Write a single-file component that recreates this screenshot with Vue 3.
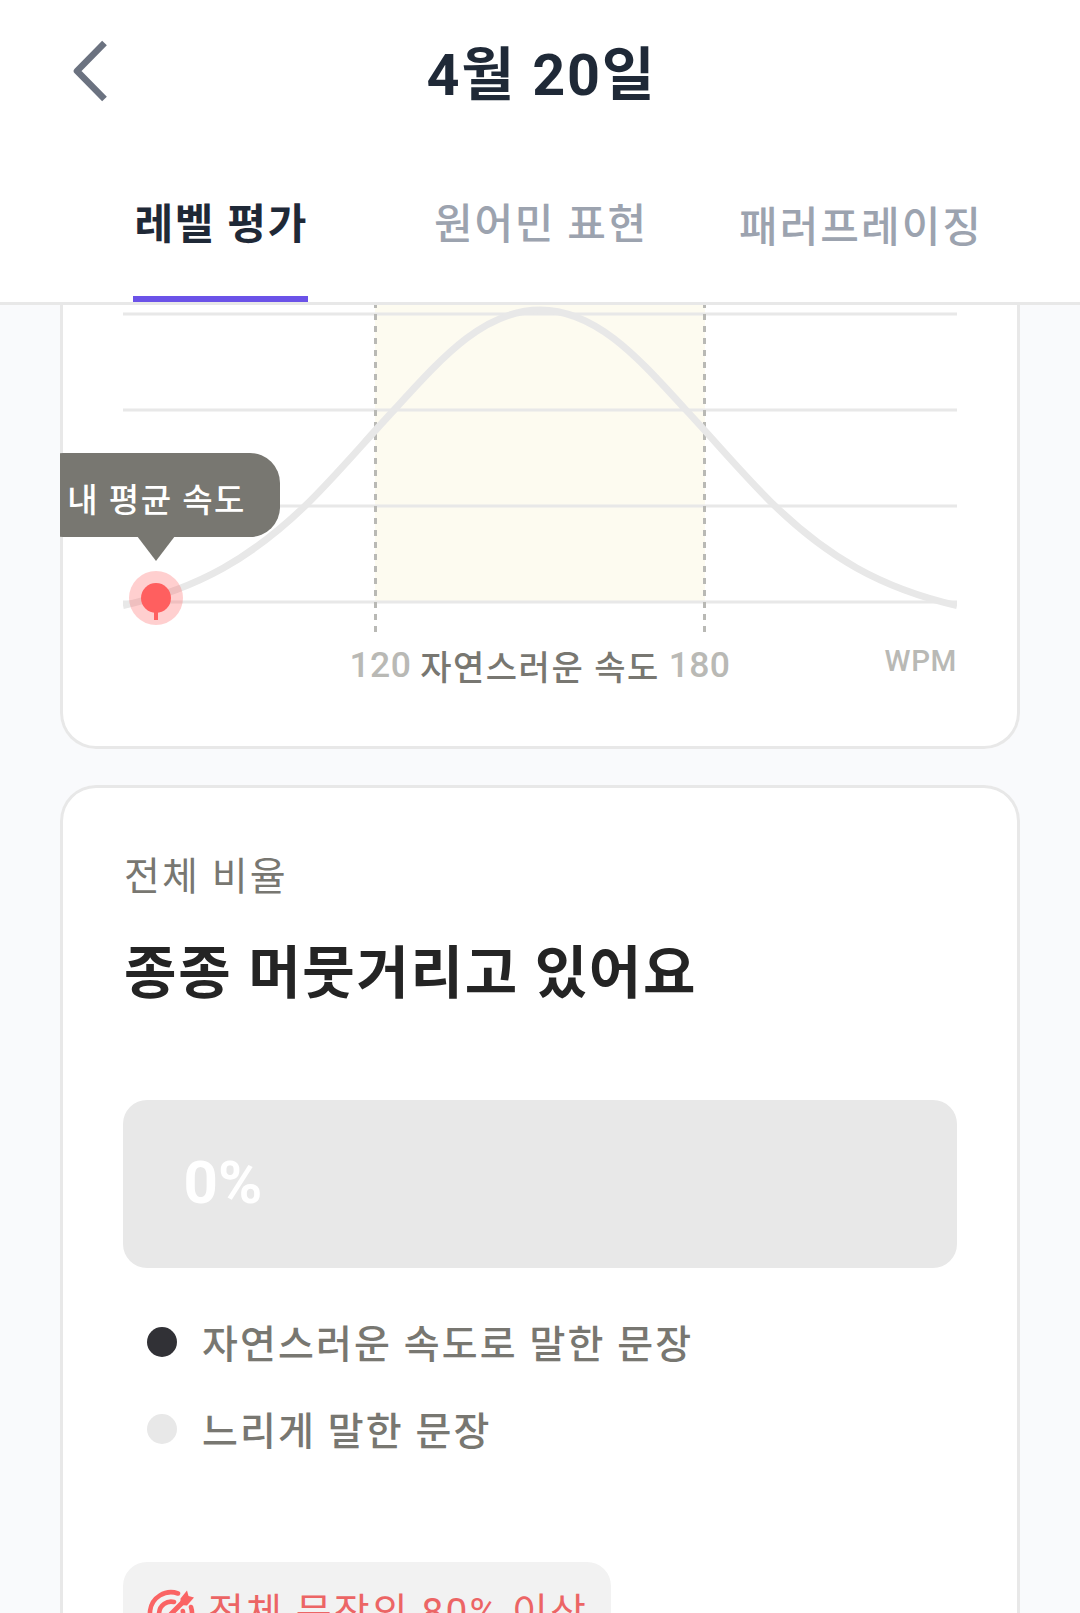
<script setup>
import { ref } from "vue";

const tabs = ["레벨 평가", "원어민 표현", "패러프레이징"];
const activeTab = ref(0);

const gridLines = [18, 114, 210, 306];
const bounds = [252.5, 581.5];

const legend = [
  { label: "자연스러운 속도로 말한 문장", tone: "dark" },
  { label: "느리게 말한 문장", tone: "light" },
];
</script>

<template>
  <div class="screen">
    <header class="header">
      <div class="title-bar">
        <button class="back-btn" title="뒤로">
          <svg width="36" height="62" viewBox="0 0 36 62" fill="none" stroke="#6b7280" stroke-width="6.6">
            <path d="M32.500 3 5 31l27.500 28" stroke-linejoin="round" />
          </svg>
        </button>
        <h1 class="title">4월 20일</h1>
      </div>
      <nav class="tabs">
        <button
          v-for="(tab, i) in tabs"
          :key="tab"
          class="tab"
          :class="[{ active: i === activeTab }, `tab-${i}`]"
          @click="activeTab = i"
        >
          {{ tab }}
        </button>
      </nav>
    </header>

    <main class="content">
      <section class="card speed-card">
        <div class="chart">
          <svg class="plot" width="834" height="336" viewBox="0 0 834 336" fill="none">
            <rect x="252" y="0" width="330" height="306" fill="#fdfbf0" />
            <path v-for="y in gridLines" :key="y" :d="`M0 ${y}H834`" stroke="#e8e8e8" stroke-width="3" />
            <path
              v-for="x in bounds"
              :key="x"
              :d="`M${x} 6V336`"
              stroke="#b9b9b5"
              stroke-width="3"
              stroke-dasharray="6 6"
            />
            <path
              d="M0 309.500C77 292 130 260 182 210C212 181 242 145 272 113C317 64 360 14 417 14C474 14 517 64 562 113C592 145 622 181 652 210C704 260 757 292 834 309.500"
              stroke="#e8e8e8"
              stroke-width="7"
            />
            <circle cx="33" cy="302" r="27" fill="#ff5f5f" fill-opacity=".3" />
            <circle cx="33" cy="302" r="15" fill="#ff5f5f" />
            <path d="M33 310V324" stroke="#ff5f5f" stroke-width="4" />
          </svg>
          <div class="tooltip">내 평균 속도</div>
        </div>
        <div class="axis">
          <span class="num">120</span>
          <span class="range">자연스러운 속도</span>
          <span class="num">180</span>
          <span class="unit">WPM</span>
        </div>
      </section>

      <section class="card ratio-card">
        <p class="caption">전체 비율</p>
        <h2 class="headline">종종 머뭇거리고 있어요</h2>
        <div class="bar">0%</div>
        <ul class="legend">
          <li v-for="item in legend" :key="item.label">
            <span class="dot" :class="item.tone"></span>
            <span class="legend-label">{{ item.label }}</span>
          </li>
        </ul>
        <div class="goal">
          <svg width="48" height="48" viewBox="0 0 48 48" fill="none" stroke="#fa6464" stroke-width="4.6" stroke-linecap="round">
            <path d="M31 4.500A21 21 0 1 0 44 18" />
            <path d="M27 13A12 12 0 1 0 35.800 22" />
            <path d="M24 25 37 12" stroke-width="5" />
            <path d="M33.500 9.500 40 1.500 41.500 7 47 8.500 40 16.500 33.500 16Z" fill="#fa6464" stroke="none" />
          </svg>
          <span class="goal-label">전체 문장의 80% 이상</span>
        </div>
      </section>
    </main>
  </div>
</template>

<style>
body {
  margin: 0;
  background: #f9fafc;
}
</style>

<style scoped>
.screen {
  width: 1080px;
  height: 1613px;
  overflow: hidden;
  display: flex;
  flex-direction: column;
  background: #f9fafc;
  font-family: Roboto, "Noto Sans CJK KR", sans-serif;
}

button {
  padding: 0;
  border: none;
  background: none;
  font: inherit;
  cursor: pointer;
}

.header {
  flex: none;
  height: 302px;
  border-bottom: 3px solid #e8e8e8;
  background: #fff;
}

.title-bar {
  display: grid;
  grid-template-columns: 120px 1fr 120px;
  align-items: center;
  height: 142px;
}

.back-btn {
  display: flex;
  padding-left: 72px;
}

.title {
  margin: 0;
  padding: 0 0 3px 3px;
  font-size: 57.5px;
  font-weight: 700;
  letter-spacing: 1.8px;
  text-align: center;
  color: #1f2937;
}

.tabs {
  display: flex;
  height: 160px;
  padding-left: 132.5px;
}

.tab {
  box-sizing: border-box;
  height: 160px;
  padding-top: 3px;
  border-bottom: 6px solid transparent;
  font-size: 42px;
  font-weight: 500;
  letter-spacing: 1.7px;
  white-space: nowrap;
  color: #9ca3af;
}

.tab.active {
  padding-left: 2px;
  font-weight: 700;
  color: #1f2937;
  border-bottom-color: #6b52e8;
}

.tab-0 {
  width: 175px;
}

.tab-1 {
  width: 216px;
  margin-left: 125.5px;
}

.tab-2 {
  width: 246px;
  margin-left: 89px;
  padding-top: 8px;
  letter-spacing: 2px;
}

.content {
  flex: 1;
  min-height: 0;
  overflow: hidden;
  display: flex;
  flex-direction: column;
  gap: 36px;
  padding: 0 60px;
}

.card {
  flex: none;
  box-sizing: border-box;
  overflow: hidden;
  padding: 0 63px;
  border-radius: 36px;
  background: #fff;
  box-shadow: inset 0 0 0 3px #e8e8e8;
}

.speed-card {
  height: 504px;
  margin-top: -60px;
  padding-top: 51px;
}

.chart {
  position: relative;
  height: 336px;
}

.plot {
  display: block;
}

.tooltip {
  position: absolute;
  right: 677px;
  top: 157px;
  height: 84px;
  box-sizing: border-box;
  padding: 6px 34px 0;
  border-radius: 30px;
  background: #787771;
  font-size: 33px;
  font-weight: 500;
  line-height: 83px;
  letter-spacing: 1.5px;
  white-space: nowrap;
  color: #fff;
}

.tooltip::after {
  content: "";
  position: absolute;
  right: 105px;
  top: 83px;
  border: 19px solid transparent;
  border-top: 25px solid #787771;
  border-bottom: 0;
}

.axis {
  position: relative;
  display: flex;
  justify-content: center;
  gap: 9px;
  margin-top: 3px;
  line-height: 60px;
}

.num {
  font-size: 35.5px;
  font-weight: 500;
  letter-spacing: 0.4px;
  color: #b9b9b5;
}

.range {
  padding-top: 3px;
  font-size: 34px;
  font-weight: 500;
  letter-spacing: 1.5px;
  color: #787771;
}

.unit {
  position: absolute;
  right: 0;
  top: -4px;
  font-size: 29.5px;
  font-weight: 500;
  letter-spacing: 0.6px;
  color: #b9b9b5;
}

.ratio-card {
  height: 1000px;
  padding-top: 62px;
}

.caption {
  margin: 0;
  padding-left: 1px;
  font-size: 39px;
  line-height: 60px;
  letter-spacing: 2.1px;
  color: #787771;
}

.headline {
  margin: 25px 0 0;
  padding-left: 1px;
  font-size: 57px;
  font-weight: 700;
  line-height: 84px;
  letter-spacing: 1.7px;
  color: #242424;
}

.bar {
  box-sizing: border-box;
  height: 168px;
  margin-top: 84px;
  padding-left: 60.5px;
  border-radius: 24px;
  background: #e8e8e8;
  font-size: 60px;
  font-weight: 700;
  line-height: 165px;
  color: #fff;
}

.legend {
  display: flex;
  flex-direction: column;
  gap: 27px;
  margin: 43.5px 0 0;
  padding: 0 0 0 24px;
  list-style: none;
}

.legend li {
  display: flex;
  align-items: center;
  height: 60px;
  font-size: 39px;
  font-weight: 500;
  letter-spacing: 2.1px;
  color: #787771;
}

.legend-label {
  padding-bottom: 1px;
}

.dot {
  width: 30px;
  height: 30px;
  margin-right: 25px;
  border-radius: 50%;
}

.dot.dark {
  background: #313136;
}

.dot.light {
  background: #e8e8e8;
}

.goal {
  box-sizing: border-box;
  display: flex;
  align-items: center;
  gap: 13px;
  width: 488px;
  height: 102px;
  margin-top: 103.5px;
  padding-left: 24px;
  border-radius: 24px;
  background: #f2f2f2;
  font-size: 39px;
  letter-spacing: 2.1px;
  white-space: nowrap;
  color: #ec6565;
}

.goal-label {
  padding-bottom: 8px;
}
</style>
